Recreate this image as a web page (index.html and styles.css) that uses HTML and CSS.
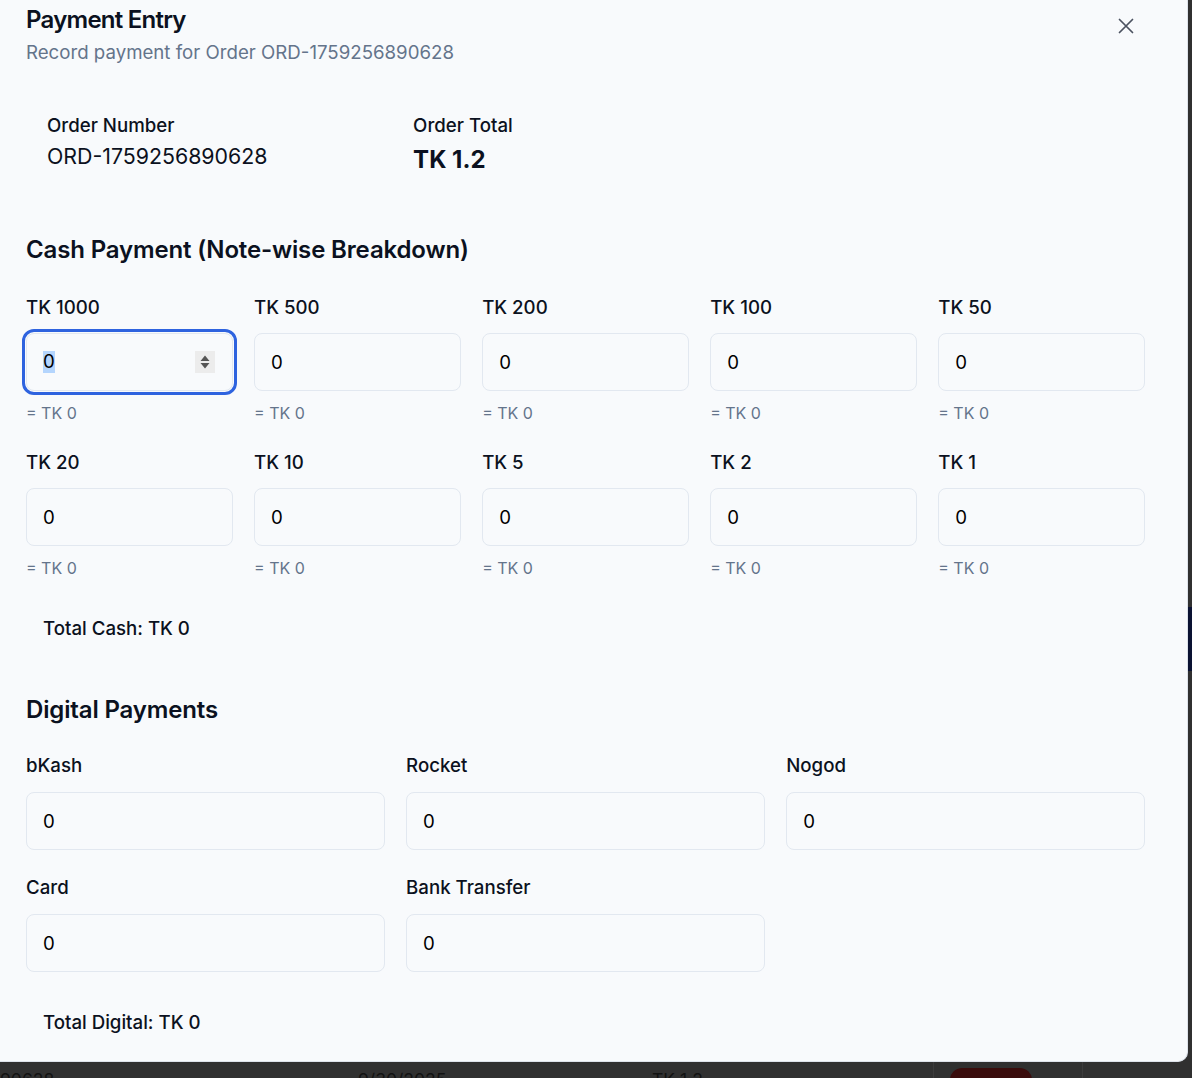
FILE: index.html
```html
<!DOCTYPE html>
<html lang="en">
<head>
<meta charset="utf-8">
<title>Payment Entry</title>
<link rel="stylesheet" href="styles.css">
</head>
<body>
<div class="screen">
  <div class="stage">
    <div class="dialog" role="dialog">
      <button class="close" aria-label="Close">
        <svg width="26" height="26" viewBox="0 0 24 24" fill="none" stroke="currentColor" stroke-width="1.6" stroke-linecap="round" stroke-linejoin="round"><path d="M18 6 6 18M6 6l12 12"/></svg>
      </button>
      <header class="dialog-header">
        <h2 class="title">Payment Entry</h2>
        <p class="subtitle">Record payment for Order ORD-1759256890628</p>
      </header>

      <div class="order-card">
        <div class="order-field">
          <div class="field-label">Order Number</div>
          <div class="order-value">ORD-1759256890628</div>
        </div>
        <div class="order-field">
          <div class="field-label">Order Total</div>
          <div class="order-total">TK 1.2</div>
        </div>
      </div>

      <section class="cash-section">
        <h3 class="section-title cash-title">Cash Payment (Note-wise Breakdown)</h3>
        <div class="notes-grid">
          <div class="field">
            <label class="field-label">TK 1000</label>
            <div class="input input-focus"><span class="selected">0</span><span class="spinner"><svg width="20" height="22" viewBox="0 0 20 22"><path d="M5.5 10 10 4.5 14.5 10Z M5.5 12 10 17.5 14.5 12Z" fill="#555"/></svg></span></div>
            <div class="sub">= TK 0</div>
          </div>
          <div class="field">
            <label class="field-label">TK 500</label>
            <input class="input" type="text" value="0" readonly>
            <div class="sub">= TK 0</div>
          </div>
          <div class="field">
            <label class="field-label">TK 200</label>
            <input class="input" type="text" value="0" readonly>
            <div class="sub">= TK 0</div>
          </div>
          <div class="field">
            <label class="field-label">TK 100</label>
            <input class="input" type="text" value="0" readonly>
            <div class="sub">= TK 0</div>
          </div>
          <div class="field">
            <label class="field-label">TK 50</label>
            <input class="input" type="text" value="0" readonly>
            <div class="sub">= TK 0</div>
          </div>
          <div class="field">
            <label class="field-label">TK 20</label>
            <input class="input" type="text" value="0" readonly>
            <div class="sub">= TK 0</div>
          </div>
          <div class="field">
            <label class="field-label">TK 10</label>
            <input class="input" type="text" value="0" readonly>
            <div class="sub">= TK 0</div>
          </div>
          <div class="field">
            <label class="field-label">TK 5</label>
            <input class="input" type="text" value="0" readonly>
            <div class="sub">= TK 0</div>
          </div>
          <div class="field">
            <label class="field-label">TK 2</label>
            <input class="input" type="text" value="0" readonly>
            <div class="sub">= TK 0</div>
          </div>
          <div class="field">
            <label class="field-label">TK 1</label>
            <input class="input" type="text" value="0" readonly>
            <div class="sub">= TK 0</div>
          </div>
        </div>
        <div class="total-box total-cash">Total Cash: TK 0</div>
      </section>

      <section class="digital-section">
        <h3 class="section-title digital-title">Digital Payments</h3>
        <div class="digital-grid">
          <div class="field">
            <label class="field-label">bKash</label>
            <input class="input" type="text" value="0" readonly>
          </div>
          <div class="field">
            <label class="field-label">Rocket</label>
            <input class="input" type="text" value="0" readonly>
          </div>
          <div class="field">
            <label class="field-label">Nogod</label>
            <input class="input" type="text" value="0" readonly>
          </div>
          <div class="field">
            <label class="field-label">Card</label>
            <input class="input" type="text" value="0" readonly>
          </div>
          <div class="field">
            <label class="field-label">Bank Transfer</label>
            <input class="input" type="text" value="0" readonly>
          </div>
        </div>
        <div class="total-box total-digital">Total Digital: TK 0</div>
      </section>
    </div>

    <div class="bg-row">
      <div class="bg-cell c1">90628</div>
      <div class="bg-cell c2">9/30/2025</div>
      <div class="bg-cell c3">TK 1.2</div>
      <div class="bg-cell c4"><span class="bg-badge"></span></div>
      <div class="bg-cell c5"></div>
    </div>
  </div>
  <div class="strip"><div class="strip-block"></div></div>
</div>
</body>
</html>
```
FILE: styles.css
```css
* {
  box-sizing: border-box;
  margin: 0;
  padding: 0;
}

html, body {
  height: 100%;
}

body {
  font-family: Inter, "Noto Sans", "Liberation Sans", sans-serif;
  background: #303030;
  color: #0f172a;
  overflow: hidden;
}

.screen {
  display: flex;
  height: 1078px;
}

.stage {
  width: 1188px;
  display: flex;
  flex-direction: column;
}

.dialog {
  position: relative;
  width: 1188px;
  height: 1062px;
  flex: none;
  background: #f8fafc;
  border-right: 1px solid #dde2ea;
  border-bottom: 1px solid #dde2ea;
  border-bottom-right-radius: 10px;
  padding: 6px 42px 15px 26px;
  overflow: hidden;
}

.close {
  position: absolute;
  top: 13px;
  right: 48px;
  width: 26px;
  height: 26px;
  border: 0;
  background: transparent;
  color: #4b5260;
  display: flex;
}

.title {
  font-size: 24px;
  line-height: 28px;
  font-weight: 600;
  letter-spacing: -0.75px;
  color: #0b1120;
}

.subtitle {
  margin-top: 6px;
  font-size: 18.67px;
  line-height: 25px;
  color: #64748b;
}

.order-card {
  margin-top: 29px;
  padding: 21px 21px 18px;
  display: grid;
  grid-template-columns: repeat(3, 1fr);
  column-gap: 21.33px;
}

.field-label {
  display: block;
  font-size: 18.67px;
  line-height: 22px;
  font-weight: 500;
  color: #0b1120;
}

.order-value {
  margin-top: 5px;
  font-size: 21.33px;
  line-height: 28px;
  color: #0b1120;
}

.order-total {
  margin-top: 8px;
  font-size: 24px;
  line-height: 30px;
  font-weight: 700;
  color: #0b1120;
}

.section-title {
  font-size: 24px;
  line-height: 28px;
  font-weight: 600;
  letter-spacing: -0.15px;
  color: #0b1120;
}

.cash-title {
  margin-top: 43px;
}

.digital-title {
  margin-top: 42px;
}

.notes-grid {
  margin-top: 34px;
  display: grid;
  grid-template-columns: repeat(5, 1fr);
  column-gap: 21.33px;
  row-gap: 30px;
}

.notes-grid .input {
  margin-top: 15px;
}

.digital-grid {
  margin-top: 32px;
  display: grid;
  grid-template-columns: repeat(3, 1fr);
  column-gap: 21.33px;
  row-gap: 28px;
}

.field {
  display: flex;
  flex-direction: column;
  min-width: 0;
}

.field .field-label {
  line-height: 20px;
}

.input {
  margin-top: 16px;
  width: 100%;
  height: 58px;
  border: 1px solid #e2e8f0;
  border-radius: 8px;
  background: transparent;
  padding: 0 16px;
  font: inherit;
  font-size: 18.67px;
  color: #000;
  outline: none;
}

.input-focus {
  display: flex;
  align-items: center;
  justify-content: space-between;
  outline: 3px solid #2e63df;
  outline-offset: 1px;
  padding-right: 17px;
}

.selected {
  background: #b4d5fd;
  line-height: 22px;
}

.spinner {
  width: 20px;
  height: 22px;
  background: #ececec;
  display: flex;
}

.sub {
  margin-top: 12px;
  font-size: 16px;
  line-height: 20px;
  color: #64748b;
}

.total-box {
  padding: 15px 17px;
  font-size: 18.67px;
  line-height: 20px;
  font-weight: 500;
  color: #0b1120;
}

.total-cash {
  margin-top: 26px;
}

.total-digital {
  margin-top: 26px;
}

.bg-row {
  display: flex;
  height: 16px;
  font-size: 17.5px;
  line-height: 25px;
  color: #121212;
}

.bg-cell {
  padding-top: 5px;
  white-space: nowrap;
  overflow: hidden;
}

.c1 { width: 358px; }
.c2 { width: 294px; }
.c3 { width: 281px; }
.c4 {
  width: 149px;
  border-left: 1px solid #3b3b3b;
  padding-left: 16px;
  padding-top: 6px;
}
.c5 {
  flex: 1;
  border-left: 1px solid #3b3b3b;
}

.bg-badge {
  display: block;
  width: 82px;
  height: 30px;
  border-radius: 12px;
  background: #3a0c0c;
}

.strip {
  width: 4px;
  background: #303030;
}

.strip-block {
  margin-top: 607px;
  height: 64px;
  background: #0a1232;
}
```
